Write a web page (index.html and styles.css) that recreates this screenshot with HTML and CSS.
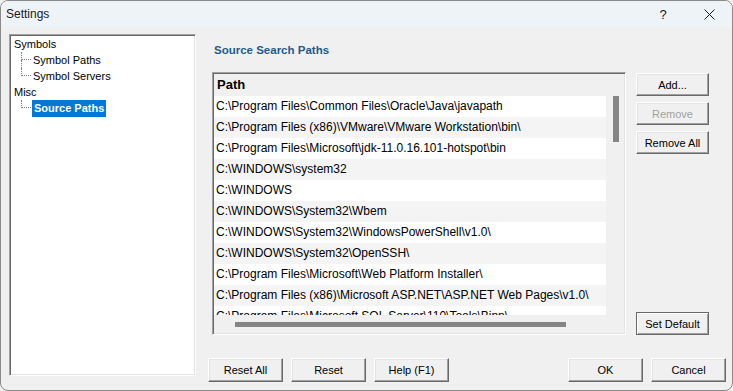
FILE: index.html
```html
<!DOCTYPE html>
<html lang="en">
<head>
  <meta charset="UTF-8" />
  <title>Settings</title>
  <link rel="stylesheet" href="styles.css">
</head>
<body>
  <div class="window">
    <div class="titlebar">
      <span class="title">Settings</span>
      <span class="caption-btn">?</span>
      <span class="caption-btn">
        <svg width="11" height="11" viewBox="0 0 11 11"><path d="M0.5 0.5 L10.5 10.5 M10.5 0.5 L0.5 10.5" stroke="#1a1a1a" stroke-width="1" fill="none"/></svg>
      </span>
    </div>

    <div class="content">
      <div class="tree">
        <div class="node">Symbols</div>
        <div class="child">
          <span class="conn"><span class="conn-top"></span><span class="conn-bottom"></span></span>
          <span class="label">Symbol Paths</span>
        </div>
        <div class="child last">
          <span class="conn"><span class="conn-top"></span><span class="conn-bottom"></span></span>
          <span class="label">Symbol Servers</span>
        </div>
        <div class="node">Misc</div>
        <div class="child last">
          <span class="conn"><span class="conn-top"></span><span class="conn-bottom"></span></span>
          <span class="label selected">Source Paths</span>
        </div>
      </div>

      <div class="pane">
        <div class="heading">Source Search Paths</div>

        <div class="middle">
          <div class="list">
            <div class="list-head">Path</div>
            <div class="list-main">
              <div class="rows">
                <div class="row">C:\Program Files\Common Files\Oracle\Java\javapath</div>
                <div class="row">C:\Program Files (x86)\VMware\VMware Workstation\bin\</div>
                <div class="row">C:\Program Files\Microsoft\jdk-11.0.16.101-hotspot\bin</div>
                <div class="row">C:\WINDOWS\system32</div>
                <div class="row">C:\WINDOWS</div>
                <div class="row">C:\WINDOWS\System32\Wbem</div>
                <div class="row">C:\WINDOWS\System32\WindowsPowerShell\v1.0\</div>
                <div class="row">C:\WINDOWS\System32\OpenSSH\</div>
                <div class="row">C:\Program Files\Microsoft\Web Platform Installer\</div>
                <div class="row">C:\Program Files (x86)\Microsoft ASP.NET\ASP.NET Web Pages\v1.0\</div>
                <div class="row">C:\Program Files\Microsoft SQL Server\110\Tools\Binn\</div>
              </div>
              <div class="vscroll"><div class="vthumb"></div></div>
            </div>
            <div class="hscroll"><div class="hthumb"></div></div>
          </div>

          <div class="side-buttons">
            <button class="btn">Add...</button>
            <button class="btn" disabled>Remove</button>
            <button class="btn">Remove All</button>
            <button class="btn focused push-down">Set Default</button>
          </div>
        </div>

        <div class="bottom">
          <button class="btn wide">Reset All</button>
          <button class="btn wide">Reset</button>
          <button class="btn wide">Help (F1)</button>
          <span class="spacer"></span>
          <button class="btn wide">OK</button>
          <button class="btn wide">Cancel</button>
        </div>
      </div>
    </div>
  </div>
</body>
</html>
```

FILE: styles.css
```css
body {
  margin: 0;
  font-family: "Liberation Sans", Arial, sans-serif;
  font-size: 11px;
  color: #000;
  background: #f0f0f0;
}

.window {
  width: 733px;
  height: 391px;
  box-sizing: border-box;
  border: 1px solid #8a8a8a;
  border-radius: 8px;
  overflow: hidden;
  background: #f0f0f0;
}

.titlebar {
  height: 26px;
  display: flex;
  align-items: center;
  background: #eef3f8;
}

.title {
  flex: 1;
  padding-left: 5px;
  font-size: 12px;
  color: #1a1a1a;
}

.caption-btn {
  width: 46px;
  height: 26px;
  display: flex;
  align-items: center;
  justify-content: center;
  font-size: 13px;
  color: #1a1a1a;
}

.content {
  display: flex;
  padding: 7px 0 0 8px;
}

/* tree */
.tree {
  width: 187px;
  height: 342px;
  box-sizing: border-box;
  background: #fff;
  border: 1px solid;
  border-color: #a0a0a0 #fff #fff #a0a0a0;
  box-shadow: inset 1px 1px 0 #696969, inset -1px -1px 0 #e3e3e3;
  padding: 1px 0 0 3px;
}

.node {
  height: 16px;
  line-height: 16px;
  padding-left: 1px;
}

.child {
  display: flex;
  height: 16px;
  padding-left: 8px;
}

.conn {
  display: flex;
  flex-direction: column;
  width: 10px;
}

.conn-top {
  height: 8px;
  border-left: 1px dotted #808080;
  border-bottom: 1px dotted #808080;
  box-sizing: border-box;
}

.conn-bottom {
  flex: 1;
  border-left: 1px dotted #808080;
}

.child.last .conn-bottom {
  border-left: none;
}

.label {
  line-height: 16px;
  padding: 0 2px 0 1px;
  margin-left: 1px;
}

.label.selected {
  background: #0078d7;
  color: #fff;
  font-weight: bold;
  height: 17px;
  line-height: 17px;
  padding: 0 2px;
  margin-top: 0px;
}

/* right side */
.pane {
  width: 518px;
  margin-left: 12px;
  display: flex;
  flex-direction: column;
}

.heading {
  margin: 9px 0 0 6px;
  height: 14px;
  line-height: 14px;
  font-size: 11.5px;
  font-weight: bold;
  color: #1e5b8c;
}

.middle {
  display: flex;
  margin-top: 15px;
  height: 263px;
}

.list {
  width: 414px;
  margin-left: 4px;
  box-sizing: border-box;
  border: 1px solid;
  border-color: #a0a0a0 #fff #fff #a0a0a0;
  box-shadow: inset 1px 1px 0 #696969, inset -1px -1px 0 #e3e3e3;
  padding: 1px 1px 1px 1px;
  display: flex;
  flex-direction: column;
  background: #f0f0f0;
}

.list-head {
  height: 22px;
  line-height: 22px;
  padding-left: 3px;
  font-size: 13px;
  font-weight: bold;
  flex-shrink: 0;
}

.list-main {
  display: flex;
  height: 219px;
}

.rows {
  width: 392px;
  overflow: hidden;
  font-size: 12px;
}

.row {
  height: 21px;
  line-height: 21px;
  padding-left: 2px;
  white-space: nowrap;
  background: #fff;
}

.row:nth-child(even) {
  background: #f4f4f4;
}

.vscroll {
  flex: 1;
  display: flex;
  justify-content: center;
}

.vthumb {
  width: 6px;
  height: 46px;
  margin-left: 1px;
  background: #858585;
}

.hscroll {
  flex: 1;
  display: flex;
  align-items: center;
}

.hthumb {
  height: 5px;
  width: 331px;
  margin-left: 21px;
  margin-top: 1px;
  background: #858585;
}

.side-buttons {
  display: flex;
  flex-direction: column;
  gap: 6px;
  margin-left: 10px;
  padding-top: 1px;
  padding-bottom: 0;
}

.push-down {
  margin-top: auto;
}

.btn {
  width: 73px;
  height: 23px;
  box-sizing: border-box;
  padding: 0;
  font-family: "Liberation Sans", Arial, sans-serif;
  font-size: 11px;
  color: #000;
  background: #f0f0f0;
  border: 1px solid;
  border-color: #fff #696969 #696969 #fff;
  box-shadow: inset -1px -1px 0 #a0a0a0, inset 1px 1px 0 #e3e3e3;
}

.btn:disabled {
  color: #a0a0a0;
}

.btn.focused {
  border-color: #696969;
  box-shadow: inset 1px 1px 0 #fff, inset -1px -1px 0 #a0a0a0;
}

.btn.wide {
  width: 75px;
  height: 24px;
}

.bottom {
  display: flex;
  gap: 8px;
  margin-top: 23px;
}

.spacer {
  flex: 1;
}
```
